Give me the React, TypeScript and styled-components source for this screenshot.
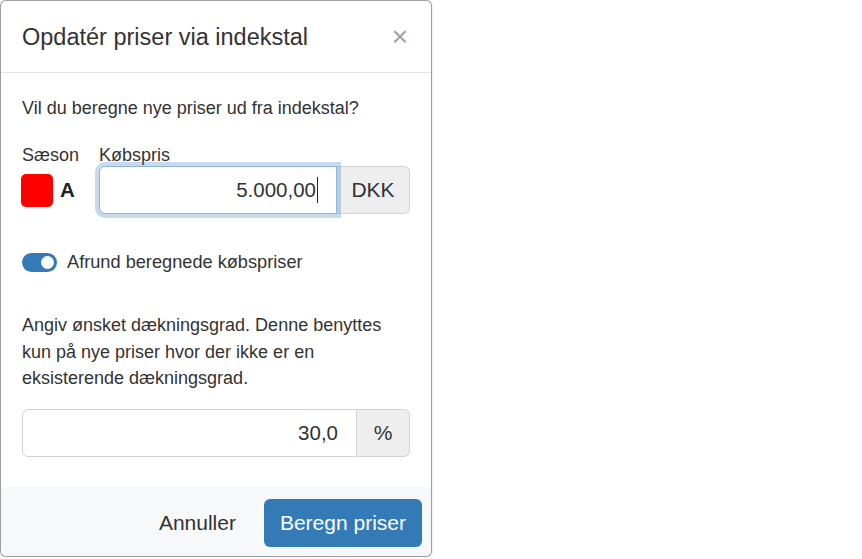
import React from 'react';
import styled, { createGlobalStyle } from 'styled-components';

const GlobalStyle = createGlobalStyle`
  html, body {
    margin: 0;
    padding: 0;
    background: #ffffff;
  }
  body {
    font-family: "Liberation Sans", Arial, Helvetica, sans-serif;
    color: #333333;
  }
  * {
    box-sizing: border-box;
  }
`;

const Modal = styled.div`
  width: 432px;
  height: 557px;
  background: #ffffff;
  border: 1px solid rgba(0, 0, 0, 0.38);
  border-radius: 6px;
  box-shadow: 0 1px 3px rgba(0, 0, 0, 0.15);
  overflow: hidden;
  display: flex;
  flex-direction: column;
`;

const Header = styled.div`
  display: flex;
  align-items: center;
  justify-content: space-between;
  padding: 23px 21px 22px 21px;
  border-bottom: 1px solid #e5e5e5;
`;

const Title = styled.h4`
  margin: 0;
  font-size: 23.5px;
  line-height: 26px;
  font-weight: 400;
  color: #333333;
`;

const CloseButton = styled.button`
  border: 0;
  background: none;
  padding: 0;
  margin-right: 2px;
  font-family: "Liberation Sans", Arial, sans-serif;
  font-size: 28px;
  line-height: 26px;
  color: #a3a3a3;
  cursor: pointer;
`;

const Body = styled.div`
  flex: 1;
  padding: 22px 21px 0 21px;
  font-size: 18px;
`;

const Lead = styled.p`
  margin: 0 0 24px 0;
  line-height: 26px;
`;

const PriceGrid = styled.div`
  display: grid;
  grid-template-columns: 77px 1fr;
  row-gap: 1px;
`;

const FieldLabel = styled.div`
  font-size: 18px;
  line-height: 20px;
`;

const SeasonCell = styled.div`
  display: flex;
  align-items: center;
  gap: 7px;
`;

const Swatch = styled.div<{ $color: string }>`
  width: 32px;
  height: 33px;
  margin-left: -1px;
  border-radius: 5px;
  background: ${(p) => p.$color};
`;

const SeasonLetter = styled.span`
  font-weight: 700;
  font-size: 20.5px;
  color: #222222;
`;

const InputGroup = styled.div`
  display: flex;
  height: 48px;
`;

const Field = styled.div<{ $focused?: boolean }>`
  position: relative;
  z-index: 1;
  flex: 1;
  display: flex;
  align-items: center;
  justify-content: flex-end;
  padding: 0 18px;
  font-size: 20.5px;
  color: #333333;
  background: #ffffff;
  border: 1px solid ${(p) => (p.$focused ? '#8db6da' : '#d3d3d3')};
  border-radius: 6px 0 0 6px;
  box-shadow: ${(p) => (p.$focused ? '0 0 0 4px rgba(51, 122, 183, 0.28)' : 'none')};
`;

const Caret = styled.span`
  display: inline-block;
  width: 1px;
  height: 26px;
  margin-left: 1px;
  background: #222222;
`;

const Addon = styled.div<{ $width: number }>`
  width: ${(p) => p.$width}px;
  display: flex;
  align-items: center;
  justify-content: center;
  font-size: 21px;
  color: #333333;
  background: #eeeeee;
  border: 1px solid #d3d3d3;
  border-left: 0;
  border-radius: 0 6px 6px 0;
`;

const ToggleRow = styled.label`
  display: flex;
  align-items: center;
  gap: 10px;
  margin-top: 35px;
  line-height: 26px;
  font-size: 18.2px;
`;

const Switch = styled.span<{ $on: boolean }>`
  position: relative;
  width: 35px;
  height: 19px;
  border-radius: 10px;
  background: ${(p) => (p.$on ? '#337ab7' : '#cccccc')};

  &::after {
    content: '';
    position: absolute;
    top: 3px;
    left: ${(p) => (p.$on ? '19px' : '3px')};
    width: 13px;
    height: 13px;
    border-radius: 50%;
    background: #ffffff;
  }
`;

const Help = styled.p`
  margin: 37px 0 17px 0;
  line-height: 26.5px;
`;

const Footer = styled.div`
  display: flex;
  justify-content: flex-end;
  align-items: center;
  gap: 14px;
  height: 69px;
  padding: 12px 9px 9px 0;
  background: #f7f8fa;
`;

const LinkButton = styled.button`
  border: 0;
  background: none;
  padding: 0 14px;
  font-family: inherit;
  font-size: 21px;
  color: #333333;
  cursor: pointer;
`;

const PrimaryButton = styled.button`
  height: 48px;
  padding: 0 16px;
  border: 0;
  border-radius: 6px;
  background: #337ab7;
  color: #ffffff;
  font-family: inherit;
  font-size: 21px;
  cursor: pointer;
`;

const App: React.FC = () => {
  return (
    <>
      <GlobalStyle />
      <Modal>
        <Header>
          <Title>Opdatér priser via indekstal</Title>
          <CloseButton aria-label="Luk">×</CloseButton>
        </Header>

        <Body>
          <Lead>Vil du beregne nye priser ud fra indekstal?</Lead>

          <PriceGrid>
            <FieldLabel>Sæson</FieldLabel>
            <FieldLabel>Købspris</FieldLabel>
            <SeasonCell>
              <Swatch $color="#ff0000" />
              <SeasonLetter>A</SeasonLetter>
            </SeasonCell>
            <InputGroup>
              <Field $focused role="textbox">
                5.000,00
                <Caret />
              </Field>
              <Addon $width={73}>DKK</Addon>
            </InputGroup>
          </PriceGrid>

          <ToggleRow>
            <Switch $on />
            Afrund beregnede købspriser
          </ToggleRow>

          <Help>
            Angiv ønsket dækningsgrad. Denne benyttes kun på nye priser hvor der ikke er en
            eksisterende dækningsgrad.
          </Help>

          <InputGroup>
            <Field>30,0</Field>
            <Addon $width={53}>%</Addon>
          </InputGroup>
        </Body>

        <Footer>
          <LinkButton>Annuller</LinkButton>
          <PrimaryButton>Beregn priser</PrimaryButton>
        </Footer>
      </Modal>
    </>
  );
};

export default App;
